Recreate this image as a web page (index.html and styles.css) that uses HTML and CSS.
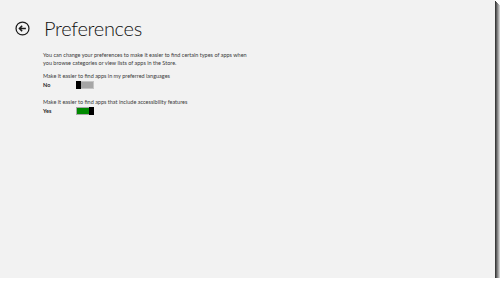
FILE: index.html
```html
<!DOCTYPE html>
<html>
<head>
<meta charset="utf-8">
<link rel="stylesheet" href="styles.css">
</head>
<body>
<div class="frame">
  <div class="header">
    <svg class="back" viewBox="0 0 16 16" width="15" height="15">
      <circle cx="8" cy="8" r="6.9" fill="none" stroke="#1a1a1a" stroke-width="1.3"/>
      <path d="M11.6 8H4.8M7.6 5.1L4.8 8l2.8 2.9" fill="none" stroke="#1a1a1a" stroke-width="1.7"/>
    </svg>
    <h1 class="title">Preferences</h1>
  </div>
  <div class="content">
    <p class="intro">You can change your preferences to make it easier to find certain types of apps when<br>you browse categories or view lists of apps in the Store.</p>
    <div class="setting">
      <div class="label">Make it easier to find apps in my preferred languages</div>
      <div class="row">
        <span class="state">No</span>
        <span class="toggle off"><span class="thumb"></span><span class="track"></span></span>
      </div>
    </div>
    <div class="setting second">
      <div class="label">Make it easier to find apps that include accessibility features</div>
      <div class="row">
        <span class="state">Yes</span>
        <span class="toggle on"><span class="track"></span><span class="thumb"></span></span>
      </div>
    </div>
  </div>
</div>
</body>
</html>
```

FILE: styles.css
```css
html, body {
  margin: 0;
  padding: 0;
  background: #ffffff;
}
.frame {
  width: 495px;
  height: 278px;
  background: #f2f2f2;
  box-shadow: 1px 1px 0 #3a3a3a, 2px 2px 0 #5e5e5e, 3px 3px 0 #848484, 4px 4px 0 #a8a8a8, 5px 5px 0 #cfcfcf;
  overflow: hidden;
  font-family: Lato, "Liberation Sans", sans-serif;
  color: #3a3a3a;
}
.header {
  display: flex;
  align-items: center;
  margin-top: 13px;
  height: 30px;
}
.back {
  display: block;
  margin-left: 14.5px;
  flex: none;
}
.title {
  margin: 0 0 0 14.5px;
  font-weight: 300;
  font-size: 20px;
  letter-spacing: -0.3px;
  line-height: 30px;
  color: #111111;
}
.content {
  margin-left: 43px;
  margin-top: 8px;
  font-size: 5.5px;
  line-height: 8px;
}
.intro {
  margin: 0;
}
.setting {
  margin-top: 5px;
}
.setting.second {
  margin-top: 9px;
}
.row {
  display: flex;
  align-items: center;
  margin-top: 1px;
  height: 8px;
}
.state {
  width: 33px;
  font-weight: 700;
  color: #222222;
}
.toggle {
  display: flex;
  width: 18px;
  height: 8px;
}
.thumb {
  width: 5px;
  height: 8px;
  background: #000000;
  flex: none;
}
.track {
  flex: 1;
  box-sizing: border-box;
  height: 8px;
  border: 1px solid #c4c4c4;
}
.off .track {
  background: #a6a6a6;
  border-left: none;
}
.on .track {
  background: #008a00;
  border-color: #a8a8a8;
  border-right: none;
}
```
